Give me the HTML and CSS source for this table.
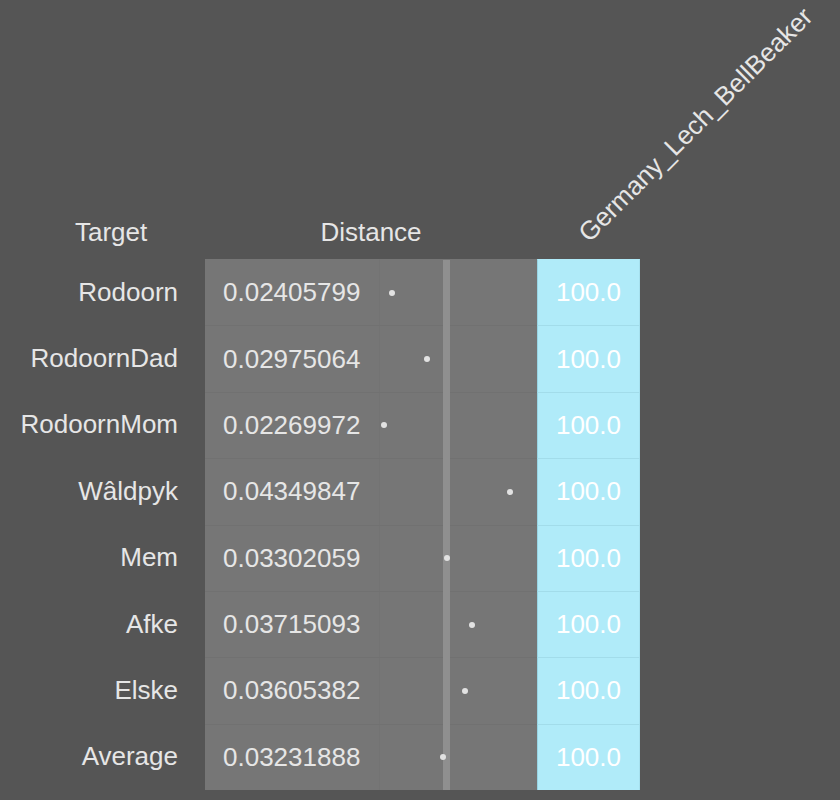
FILE: index.html
```html
<!DOCTYPE html>
<html>
<head>
<meta charset="utf-8">
<link rel="stylesheet" href="styles.css">
</head>
<body>
<div class="grid">
  <div class="hd hd-target">Target</div>
  <div class="hd hd-distance">Distance</div>
  <div class="hd hd-pop"><span class="rot">Germany_Lech_BellBeaker</span></div>

  <div class="lbl">Rodoorn</div>
  <div class="num first">0.02405799</div>
  <div class="plot first"><i class="dot" style="left:12px"></i></div>
  <div class="pct first">100.0</div>

  <div class="lbl">RodoornDad</div>
  <div class="num">0.02975064</div>
  <div class="plot"><i class="dot" style="left:47px"></i></div>
  <div class="pct">100.0</div>

  <div class="lbl">RodoornMom</div>
  <div class="num">0.02269972</div>
  <div class="plot"><i class="dot" style="left:4px"></i></div>
  <div class="pct">100.0</div>

  <div class="lbl">Wâldpyk</div>
  <div class="num">0.04349847</div>
  <div class="plot"><i class="dot" style="left:130px"></i></div>
  <div class="pct">100.0</div>

  <div class="lbl">Mem</div>
  <div class="num">0.03302059</div>
  <div class="plot"><i class="dot" style="left:67px"></i></div>
  <div class="pct">100.0</div>

  <div class="lbl">Afke</div>
  <div class="num">0.03715093</div>
  <div class="plot"><i class="dot" style="left:92px"></i></div>
  <div class="pct">100.0</div>

  <div class="lbl">Elske</div>
  <div class="num">0.03605382</div>
  <div class="plot"><i class="dot" style="left:85px"></i></div>
  <div class="pct">100.0</div>

  <div class="lbl">Average</div>
  <div class="num">0.03231888</div>
  <div class="plot"><i class="dot" style="left:63px"></i></div>
  <div class="pct">100.0</div>
</div>
</body>
</html>
```

FILE: styles.css
```css
html, body {
  margin: 0;
  padding: 0;
  background: #555555;
}
body {
  width: 840px;
  height: 800px;
  overflow: hidden;
  font-family: "Liberation Sans", Arial, sans-serif;
  font-size: 26px;
  color: #e6e6e6;
}
.grid {
  display: grid;
  grid-template-columns: 205px 175px 157px 103px;
  grid-template-rows: 259px repeat(8, 66.375px);
}
.hd {
  display: flex;
  align-items: flex-end;
  line-height: 30px;
  padding-bottom: 12px;
  box-sizing: border-box;
}
.hd-target {
  padding-left: 75px;
}
.hd-distance {
  grid-column: 2 / span 2;
  justify-content: center;
}
.hd-pop {
  position: relative;
}
.rot {
  position: absolute;
  left: 55px;
  top: 220px;
  line-height: 26px;
  height: 26px;
  white-space: nowrap;
  transform-origin: 0 100%;
  transform: rotate(-45deg);
}
.lbl {
  display: flex;
  align-items: center;
  justify-content: flex-end;
  padding-right: 27px;
}
.num, .plot, .pct {
  box-sizing: border-box;
  border-top: 1px solid #717171;
}
.first {
  border-top-color: transparent;
}
.num {
  display: flex;
  align-items: center;
  padding-left: 18px;
  background: #767676;
  border-right: 1px solid #737373;
}
.plot {
  position: relative;
  background: #767676;
}
.plot::before {
  content: "";
  position: absolute;
  left: 63px;
  width: 7px;
  top: -1px;
  bottom: 0;
  background: #8f8f8f;
}
.plot.first::before {
  top: 0;
}
.dot {
  position: absolute;
  top: 50%;
  width: 6px;
  height: 6px;
  margin: -3px 0 0 -3px;
  border-radius: 50%;
  background: #e2e2e2;
}
.pct {
  display: flex;
  align-items: center;
  justify-content: center;
  background: #b0ebf9;
  color: #ffffff;
  border-top-color: #a2dcea;
  border-left: 1px solid #98d4e3;
  border-right: 1px solid #a6e0ee;
}
.pct.first {
  border-top-color: #b0ebf9;
}
```
